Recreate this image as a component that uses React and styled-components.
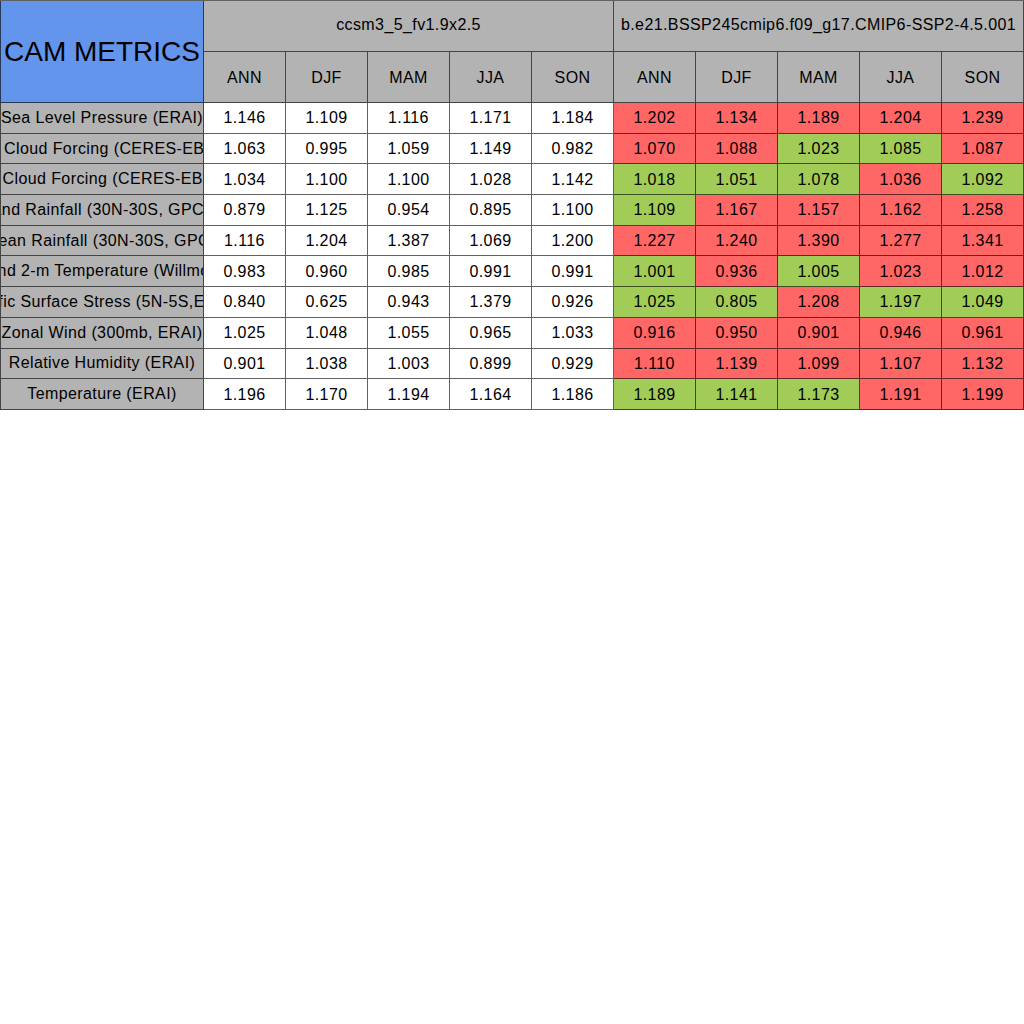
import React from "react";
import styled, { createGlobalStyle } from "styled-components";

const Global = createGlobalStyle`
  html, body { margin: 0; padding: 0; background: #ffffff; }
  body { font-family: "Liberation Sans", Arial, sans-serif; color: #000; }
`;

const LINE = "rgba(0,0,0,0.62)";

const Grid = styled.div`
  display: grid;
  grid-template-columns: 204px repeat(10, 82px);
  grid-template-rows: 51px 51px repeat(10, 30.7px);
  width: 1024px;
  border-top: 1px solid ${LINE};
  box-sizing: border-box;
`;

const Cell = styled.div`
  box-sizing: border-box;
  display: flex;
  align-items: center;
  justify-content: center;
  overflow: hidden;
  white-space: nowrap;
  font-size: 16px;
  letter-spacing: 0.4px;
  border-right: 1px solid ${LINE};
  border-bottom: 1px solid ${LINE};
  background: ${(p) => p.$bg || "#ffffff"};
`;

const Title = styled(Cell)`
  grid-row: 1 / span 2;
  grid-column: 1;
  background: #6495ed;
  font-size: 28px;
  letter-spacing: 0;
  border-left: 1px solid ${LINE};
`;

const CaseHeader = styled(Cell)`
  grid-row: 1;
  grid-column: ${(p) => p.$col} / span 5;
  background: #b3b3b3;
  padding-bottom: 2px;
`;

const SeasonHeader = styled(Cell)`
  grid-row: 2;
  background: #b3b3b3;
  padding-top: 1px;
`;

const Label = styled(Cell)`
  background: #b3b3b3;
  border-left: 1px solid ${LINE};
`;

const Value = styled(Cell)`
  padding-top: 1px;
`;

const RED = "#ff6666";
const GREEN = "#a1cc57";

const seasons = ["ANN", "DJF", "MAM", "JJA", "SON"];

const rows = [
  ["Sea Level Pressure (ERAI)", ["1.146", "1.109", "1.116", "1.171", "1.184"], ["1.202", "1.134", "1.189", "1.204", "1.239"], "RRRRR"],
  ["SW Cloud Forcing (CERES-EBAF)", ["1.063", "0.995", "1.059", "1.149", "0.982"], ["1.070", "1.088", "1.023", "1.085", "1.087"], "RRGGR"],
  ["LW Cloud Forcing (CERES-EBAF)", ["1.034", "1.100", "1.100", "1.028", "1.142"], ["1.018", "1.051", "1.078", "1.036", "1.092"], "GGGRG"],
  ["Land Rainfall (30N-30S, GPCP)", ["0.879", "1.125", "0.954", "0.895", "1.100"], ["1.109", "1.167", "1.157", "1.162", "1.258"], "GRRRR"],
  ["Ocean Rainfall (30N-30S, GPCP)", ["1.116", "1.204", "1.387", "1.069", "1.200"], ["1.227", "1.240", "1.390", "1.277", "1.341"], "RRRRR"],
  ["Land 2-m Temperature (Willmott)", ["0.983", "0.960", "0.985", "0.991", "0.991"], ["1.001", "0.936", "1.005", "1.023", "1.012"], "GRGRR"],
  ["Pacific Surface Stress (5N-5S,ERAI)", ["0.840", "0.625", "0.943", "1.379", "0.926"], ["1.025", "0.805", "1.208", "1.197", "1.049"], "GGRGG"],
  ["Zonal Wind (300mb, ERAI)", ["1.025", "1.048", "1.055", "0.965", "1.033"], ["0.916", "0.950", "0.901", "0.946", "0.961"], "RRRRR"],
  ["Relative Humidity (ERAI)", ["0.901", "1.038", "1.003", "0.899", "0.929"], ["1.110", "1.139", "1.099", "1.107", "1.132"], "RRRRR"],
  ["Temperature (ERAI)", ["1.196", "1.170", "1.194", "1.164", "1.186"], ["1.189", "1.141", "1.173", "1.191", "1.199"], "GGGRR"],
];

export default function App() {
  return (
    <>
      <Global />
      <Grid>
        <Title>CAM METRICS</Title>
        <CaseHeader $col={2}>ccsm3_5_fv1.9x2.5</CaseHeader>
        <CaseHeader $col={7}>b.e21.BSSP245cmip6.f09_g17.CMIP6-SSP2-4.5.001</CaseHeader>
        {[...seasons, ...seasons].map((s, i) => (
          <SeasonHeader key={"s" + i}>{s}</SeasonHeader>
        ))}
        {rows.map(([label, base, test, colors], r) => (
          <React.Fragment key={r}>
            <Label>{label}</Label>
            {base.map((v, i) => (
              <Value key={"b" + i}>{v}</Value>
            ))}
            {test.map((v, i) => (
              <Value key={"t" + i} $bg={colors[i] === "G" ? GREEN : RED}>
                {v}
              </Value>
            ))}
          </React.Fragment>
        ))}
      </Grid>
    </>
  );
}
